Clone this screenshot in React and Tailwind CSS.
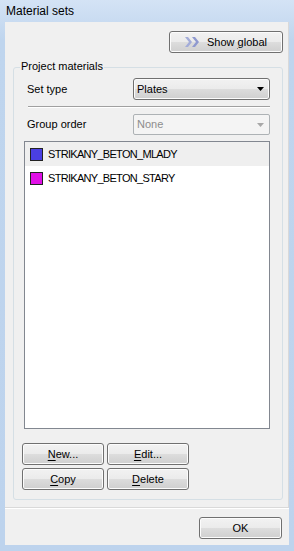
import React from 'react';

const FONT = "font-['Liberation_Sans',Arial,sans-serif]";

const Btn = ({ children, className = '' }) => (
  <div
    role="button"
    className={`flex items-center justify-center rounded-[3px] border border-[#707070] bg-[linear-gradient(#f2f2f2,#ebebeb_50%,#dddddd_50%,#cfcfcf)] shadow-[inset_0_0_0_1px_#fcfcfc] text-[11px] font-normal text-black select-none ${className}`}
  >
    {children}
  </div>
);

const U = ({ children }) => <span className="underline underline-offset-[2px]">{children}</span>;

const Arrow = ({ color }) => (
  <svg width="7" height="4" viewBox="0 0 7 4">
    <polygon points="0,0 7,0 3.5,4" fill={color} />
  </svg>
);

const Chevrons = () => (
  <svg width="15" height="10" viewBox="0 0 15 10">
    <polygon points="0,0 3,0 7,5 3,10 0,10 4,5" fill="#a3acd9" />
    <polygon points="7,0 10,0 14,5 10,10 7,10 11,5" fill="#8f99cf" />
  </svg>
);

const materials = [
  { name: 'STRIKANY_BETON_MLADY', color: '#4a3fe2', selected: true },
  { name: 'STRIKANY_BETON_STARY', color: '#e010e6', selected: false },
];

export default function App() {
  return (
    <div className={`w-[294px] h-[551px] flex flex-col bg-[linear-gradient(#d4e3f5,#bfd5ee_40px,#bdd3ed)] ${FONT}`}>
      <div className="h-[22px] flex items-center pl-[6px] text-[12px] text-black">Material sets</div>

      <div className="flex-1 mx-[5px] mb-[6px] bg-[#f0f0f0] flex flex-col">
        {/* upper area */}
        <div className="h-[486px] flex flex-col border-r border-b border-[#d9d9d9]">
          <div className="flex justify-end pt-[9px] pr-[5px]">
            <Btn className="w-[114px] h-[22px] gap-[7px]">
              <Chevrons />
              <span>Show <U>g</U>lobal</span>
            </Btn>
          </div>

          <div className="relative mt-[14px] ml-[8px] mr-[5px] h-[433px] border border-[#d5dfe5] rounded-[3px] flex flex-col pt-[10px]">
            <span className="absolute left-[6px] -top-[8px] px-[1px] bg-[#f0f0f0] text-[11px] leading-[13px] text-black">
              Project materials
            </span>

            <div className="flex items-center justify-between pl-[13px] pr-[12px] h-[22px]">
              <span className="text-[11px] text-black">Set type</span>
              <div className="w-[137px] h-[22px] flex items-center justify-between pl-[3px] pr-[5px] rounded-[3px] border border-[#707070] bg-[linear-gradient(#f2f2f2,#ebebeb_50%,#dddddd_50%,#cfcfcf)] shadow-[inset_0_0_0_1px_#fcfcfc] text-[11px] text-black">
                <span>Plates</span>
                <Arrow color="#000" />
              </div>
            </div>

            <div className="mt-[6px] ml-[14px] mr-[12px] h-[2px] border-t border-[#a0a0a0] border-b border-b-white" />

            <div className="mt-[6px] flex items-center justify-between pl-[13px] pr-[12px] h-[21px]">
              <span className="text-[11px] text-black">Group order</span>
              <div className="w-[137px] h-[21px] flex items-center justify-between pl-[3px] pr-[5px] rounded-[2px] border border-[#adb2b5] bg-[#f4f4f4] text-[11px] text-[#8d8d8d]">
                <span>None</span>
                <Arrow color="#a8a8a8" />
              </div>
            </div>

            <div className="mt-[6px] ml-[10px] w-[246px] h-[288px] border border-[#828790] bg-white flex flex-col">
              {materials.map((m) => (
                <div
                  key={m.name}
                  className={`h-[24px] flex items-center pl-[5px] gap-[5px] ${m.selected ? 'bg-[#efefef]' : ''}`}
                >
                  <span className="w-[13px] h-[13px] border border-[#222]" style={{ backgroundColor: m.color }} />
                  <span className="text-[11px] tracking-[-0.7px] text-black">{m.name}</span>
                </div>
              ))}
            </div>

            <div className="mt-[14px] ml-[8px] grid grid-cols-[82px_82px] gap-[3px]">
              <Btn className="h-[22px]"><span><U>N</U>ew...</span></Btn>
              <Btn className="h-[22px]"><span><U>E</U>dit...</span></Btn>
              <Btn className="h-[22px]"><span><U>C</U>opy</span></Btn>
              <Btn className="h-[22px]"><span><U>D</U>elete</span></Btn>
            </div>
          </div>
        </div>

        {/* bottom area */}
        <div className="flex-1 border-t border-white flex justify-end items-start pt-[8px] pr-[7px]">
          <Btn className="w-[83px] h-[22px]">OK</Btn>
        </div>
      </div>
    </div>
  );
}
